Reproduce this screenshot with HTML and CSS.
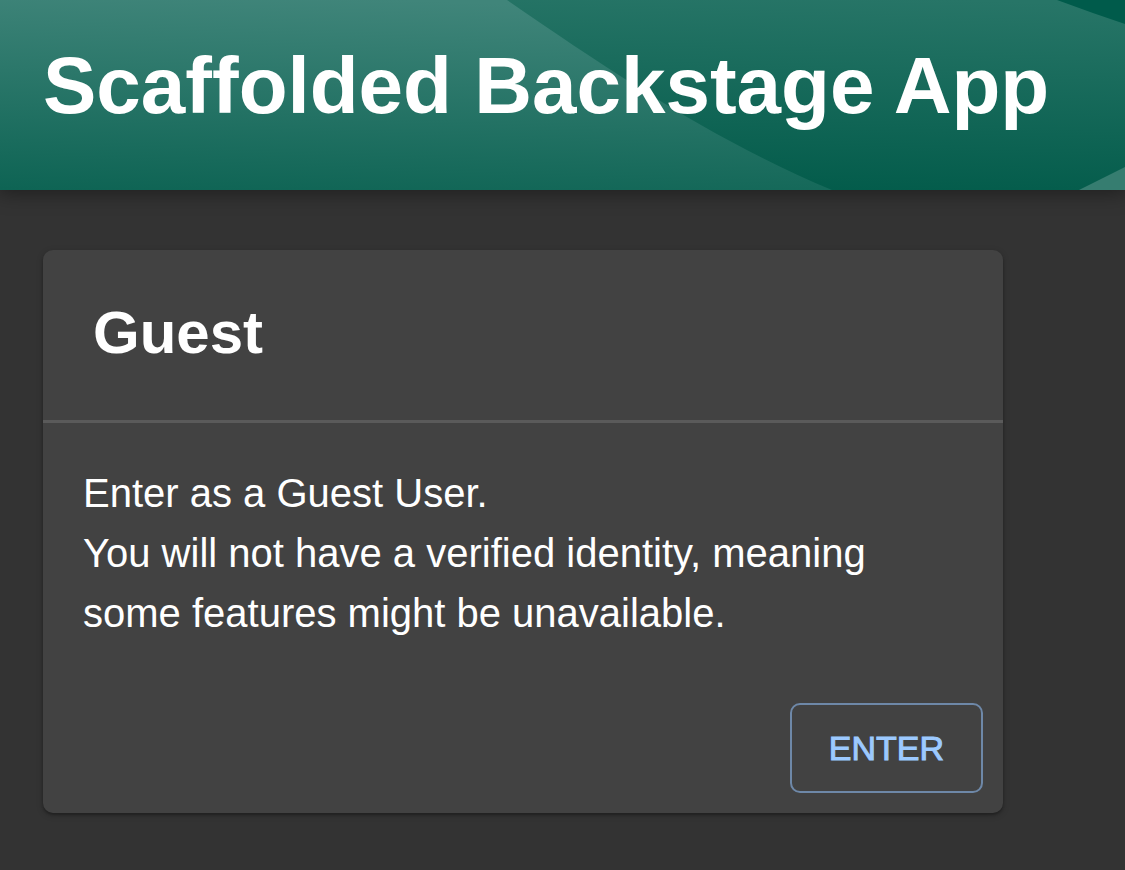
FILE: index.html
```html
<!DOCTYPE html>
<html lang="en">
<head>
<meta charset="utf-8">
<meta name="viewport" content="width=device-width, initial-scale=1">
<title>Scaffolded Backstage App</title>
<link rel="stylesheet" href="styles.css">
</head>
<body>
<header class="header">
  <svg class="header-waves" viewBox="0 0 1125 190" preserveAspectRatio="none" aria-hidden="true">
    <defs>
      <linearGradient id="wave-left" gradientUnits="userSpaceOnUse" x1="300" y1="-4" x2="292" y2="200">
        <stop offset="0" stop-color="#40857a"/>
        <stop offset="1" stop-color="#0e6454"/>
      </linearGradient>
      <linearGradient id="wave-mid" gradientUnits="userSpaceOnUse" x1="850" y1="-4" x2="843" y2="198">
        <stop offset="0" stop-color="#277567"/>
        <stop offset="1" stop-color="#025b4a"/>
      </linearGradient>
    </defs>
    <path fill="url(#wave-mid)" d="M0 0H1057Q1092 13 1125 24V190H0Z"/>
    <path fill="url(#wave-left)" d="M0 0H507C620 78 718 142 832 190H0Z"/>
    <path fill="#367d70" d="M1079 190L1125 167V190Z"/>
  </svg>
  <h1 class="title">Scaffolded Backstage App</h1>
</header>
<main class="content">
  <section class="card" aria-labelledby="guest-title">
    <div class="card-header">
      <h2 class="card-title" id="guest-title">Guest</h2>
    </div>
    <div class="card-body">
      <p class="card-text">Enter as a Guest User.<br>You will not have a verified identity, meaning some features might be unavailable.</p>
    </div>
    <div class="card-actions">
      <button class="button" type="button">ENTER</button>
    </div>
  </section>
</main>
</body>
</html>
```
FILE: styles.css
```css
* {
  box-sizing: border-box;
}

body {
  margin: 0;
  min-height: 100vh;
  background: #333;
  color: #fff;
  font-family: "Helvetica Neue", "Liberation Sans", Arial, sans-serif;
}

.header {
  position: relative;
  padding: 38px 43px 56px;
  background: #005b4b;
  box-shadow: 0 0 20px 2px rgba(0, 0, 0, 0.45);
}

.header-waves {
  position: absolute;
  inset: 0;
  width: 100%;
  height: 100%;
}

.title {
  position: relative;
  margin: 0;
  font-size: 80px;
  line-height: 96px;
}

.content {
  padding: 60px 43px;
}

.card {
  max-width: 960px;
  border-radius: 10px;
  background: #424242;
  box-shadow: 0 2px 6px rgba(0, 0, 0, 0.25), 0 2px 2px rgba(0, 0, 0, 0.2);
}

.card-header {
  padding: 47px 50px 51px;
  border-bottom: 3px solid #5a5a5a;
}

.card-title {
  margin: 0;
  font-size: 60px;
  line-height: 72px;
}

.card-body {
  padding: 40px;
}

.card-text {
  margin: 0;
  font-size: 40px;
  line-height: 60px;
}

.card-actions {
  display: flex;
  justify-content: flex-end;
  padding: 20px;
}

.button {
  padding: 14px 37px;
  border: 2px solid #6e88a8;
  border-radius: 10px;
  background: transparent;
  color: #9cc9ff;
  font-family: inherit;
  font-size: 34px;
  line-height: 58px;
  -webkit-text-stroke: 1px currentColor;
  cursor: pointer;
}
```
